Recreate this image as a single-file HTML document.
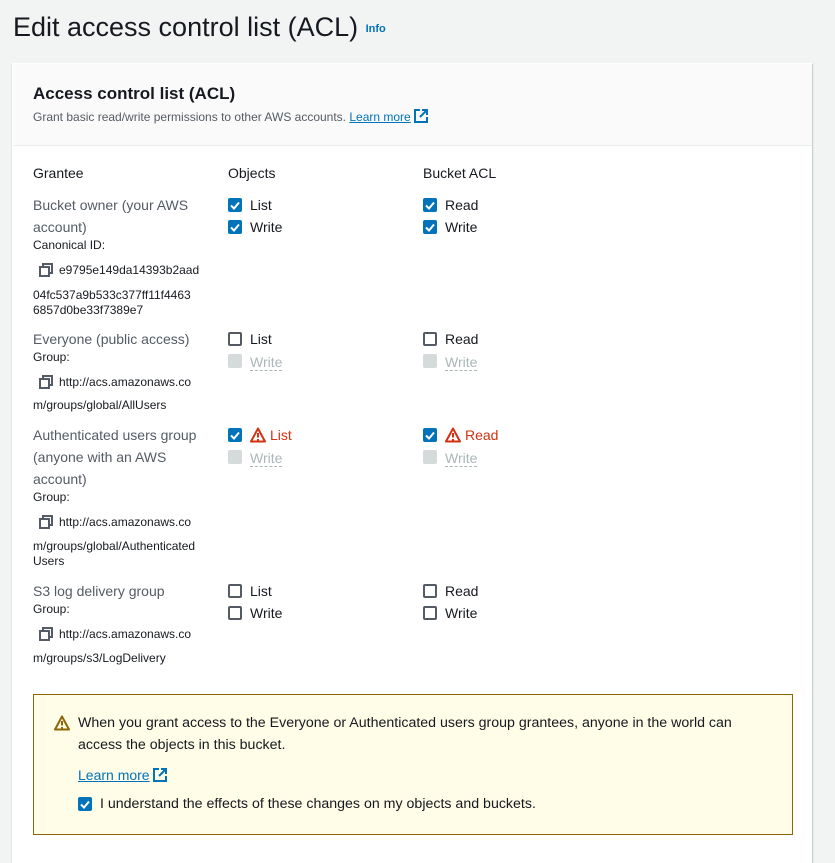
<!DOCTYPE html>
<html><head><meta charset="utf-8"><style>
body{margin:0;background:#f2f3f3;font-family:"Liberation Sans","DejaVu Sans",sans-serif;color:#16191f;width:835px;height:839px;overflow:hidden;position:relative}
.a{position:absolute;white-space:nowrap;line-height:20px}
.t{font-size:14px}
.g{font-size:14px;color:#545b64}
.s{font-size:12px}
.cb{position:absolute;width:14px;height:14px;box-sizing:border-box;border-radius:2px}
.off{border:2px solid #545b64;background:#fff}
.dis{background:#d5dbdb}
.dl{color:#aab7b8;border-bottom:1px dashed #aab7b8;line-height:16px}
.red{color:#d13212}
.lnk{color:#0073bb;text-decoration:underline}
</style></head><body>
<div class="a" style="left:13px;top:7px;font-size:27px;line-height:40px">Edit access control list (ACL) <span style="font-size:11px;font-weight:bold;color:#0073bb;vertical-align:middle">Info</span></div>
<div style="position:absolute;left:12px;top:63px;width:800px;height:800px;background:#fff;box-shadow:0 1px 1px rgba(0,28,36,.3),1px 1px 1px rgba(0,28,36,.15)"></div>
<div style="position:absolute;left:13px;top:64px;width:799px;height:81px;background:#fafafa;border-bottom:1px solid #eaeded"></div>
<div class="a" style="left:33px;top:84px;font-size:17px;font-weight:bold">Access control list (ACL)</div>
<div class="a s" style="left:33px;top:107px;color:#545b64;font-size:12px">Grant basic read/write permissions to other AWS accounts. <span class="lnk">Learn more</span> <svg width="14" height="14" viewBox="0 0 14 14" style="vertical-align:-2px"><path d="M6 1H1v12h12V8M8 1h5v5M13 1L6 8" fill="none" stroke="#0073bb" stroke-width="2"/></svg></div>

<div class="a t" style="left:33px;top:163px">Grantee</div>
<div class="a t" style="left:228px;top:163px">Objects</div>
<div class="a t" style="left:423px;top:163px">Bucket ACL</div>

<svg width="0" height="0" style="position:absolute"><defs>
<symbol id="ck" viewBox="0 0 14 14"><rect width="14" height="14" rx="2" fill="#0073bb"/><path d="M3 7.5l3 3 5-6" fill="none" stroke="#fff" stroke-width="2"/></symbol>
<symbol id="cp" viewBox="0 0 14 14"><path d="M1 4h9v9H1zM4 4V1h9v9h-3" fill="none" stroke="#545b64" stroke-width="2"/></symbol>
<symbol id="wr" viewBox="0 0 16 16"><path d="M8 1.5L1 14.5h14z" fill="none" stroke="#d13212" stroke-width="2" stroke-linejoin="round"/><path d="M8 6v4.5M8 12v1.5" stroke="#d13212" stroke-width="2"/></symbol>
<symbol id="wy" viewBox="0 0 16 16"><path d="M8 1.5L1 14.5h14z" fill="none" stroke="#8d6605" stroke-width="2" stroke-linejoin="round"/><path d="M8 6v4.5M8 12v1.5" stroke="#8d6605" stroke-width="2"/></symbol>
</defs></svg>

<div class="a g" style="left:33px;top:195px">Bucket owner (your AWS</div>
<div class="a g" style="left:33px;top:217px">account)</div>
<div class="a s" style="left:33px;top:235px">Canonical ID:</div>
<svg class="a" style="left:39px;top:263px" width="14" height="14"><use href="#cp"/></svg>
<div class="a s" style="left:59px;top:260px">e9795e149da14393b2aad</div>
<div class="a s" style="left:33px;top:285px">04fc537a9b533c377ff11f4463</div>
<div class="a s" style="left:33px;top:300px">6857d0be33f7389e7</div>
<svg class="a" style="left:228px;top:198px" width="14" height="14"><use href="#ck"/></svg><div class="a t" style="left:250px;top:195px">List</div>
<svg class="a" style="left:228px;top:220px" width="14" height="14"><use href="#ck"/></svg><div class="a t" style="left:250px;top:217px">Write</div>
<svg class="a" style="left:423px;top:198px" width="14" height="14"><use href="#ck"/></svg><div class="a t" style="left:445px;top:195px">Read</div>
<svg class="a" style="left:423px;top:220px" width="14" height="14"><use href="#ck"/></svg><div class="a t" style="left:445px;top:217px">Write</div>

<div class="a g" style="left:33px;top:329px">Everyone (public access)</div>
<div class="a s" style="left:33px;top:347px">Group:</div>
<svg class="a" style="left:39px;top:375px" width="14" height="14"><use href="#cp"/></svg>
<div class="a s" style="left:59px;top:372px">http://acs.amazonaws.co</div>
<div class="a s" style="left:33px;top:395px">m/groups/global/AllUsers</div>
<div class="cb off" style="left:228px;top:332px"></div><div class="a t" style="left:250px;top:329px">List</div>
<div class="cb dis" style="left:228px;top:354px"></div><div class="a t" style="left:250px;top:352px"><span class="dl">Write</span></div>
<div class="cb off" style="left:423px;top:332px"></div><div class="a t" style="left:445px;top:329px">Read</div>
<div class="cb dis" style="left:423px;top:354px"></div><div class="a t" style="left:445px;top:352px"><span class="dl">Write</span></div>

<div class="a g" style="left:33px;top:425px">Authenticated users group</div>
<div class="a g" style="left:33px;top:447px">(anyone with an AWS</div>
<div class="a g" style="left:33px;top:469px">account)</div>
<div class="a s" style="left:33px;top:487px">Group:</div>
<svg class="a" style="left:39px;top:515px" width="14" height="14"><use href="#cp"/></svg>
<div class="a s" style="left:59px;top:512px">http://acs.amazonaws.co</div>
<div class="a s" style="left:33px;top:536px">m/groups/global/Authenticated</div>
<div class="a s" style="left:33px;top:551px">Users</div>
<svg class="a" style="left:228px;top:428px" width="14" height="14"><use href="#ck"/></svg>
<svg class="a" style="left:250px;top:427px" width="16" height="16"><use href="#wr"/></svg><div class="a t red" style="left:270px;top:425px">List</div>
<div class="cb dis" style="left:228px;top:450px"></div><div class="a t" style="left:250px;top:448px"><span class="dl">Write</span></div>
<svg class="a" style="left:423px;top:428px" width="14" height="14"><use href="#ck"/></svg>
<svg class="a" style="left:445px;top:427px" width="16" height="16"><use href="#wr"/></svg><div class="a t red" style="left:465px;top:425px">Read</div>
<div class="cb dis" style="left:423px;top:450px"></div><div class="a t" style="left:445px;top:448px"><span class="dl">Write</span></div>

<div class="a g" style="left:33px;top:581px">S3 log delivery group</div>
<div class="a s" style="left:33px;top:599px">Group:</div>
<svg class="a" style="left:39px;top:627px" width="14" height="14"><use href="#cp"/></svg>
<div class="a s" style="left:59px;top:624px">http://acs.amazonaws.co</div>
<div class="a s" style="left:33px;top:648px">m/groups/s3/LogDelivery</div>
<div class="cb off" style="left:228px;top:584px"></div><div class="a t" style="left:250px;top:581px">List</div>
<div class="cb off" style="left:228px;top:606px"></div><div class="a t" style="left:250px;top:603px">Write</div>
<div class="cb off" style="left:423px;top:584px"></div><div class="a t" style="left:445px;top:581px">Read</div>
<div class="cb off" style="left:423px;top:606px"></div><div class="a t" style="left:445px;top:603px">Write</div>

<div style="position:absolute;left:33px;top:694px;width:758px;height:139px;background:#fffce7;border:1px solid #8d6605"></div>
<svg class="a" style="left:54px;top:715px" width="16" height="16"><use href="#wy"/></svg>
<div class="a t" style="left:78px;top:713px;font-size:14.2px">When you grant access to the Everyone or Authenticated users group grantees, anyone in the world can</div>
<div class="a t" style="left:78px;top:735px;font-size:14.2px">access the objects in this bucket.</div>
<div class="a t" style="left:78px;top:765px"><span class="lnk">Learn more</span> <svg width="14" height="14" viewBox="0 0 14 14" style="vertical-align:-2px"><path d="M6 1H1v12h12V8M8 1h5v5M13 1L6 8" fill="none" stroke="#0073bb" stroke-width="2"/></svg></div>
<svg class="a" style="left:78px;top:797px" width="14" height="14"><use href="#ck"/></svg>
<div class="a t" style="left:100px;top:794px;font-size:14.2px">I understand the effects of these changes on my objects and buckets.</div>
</body></html>
